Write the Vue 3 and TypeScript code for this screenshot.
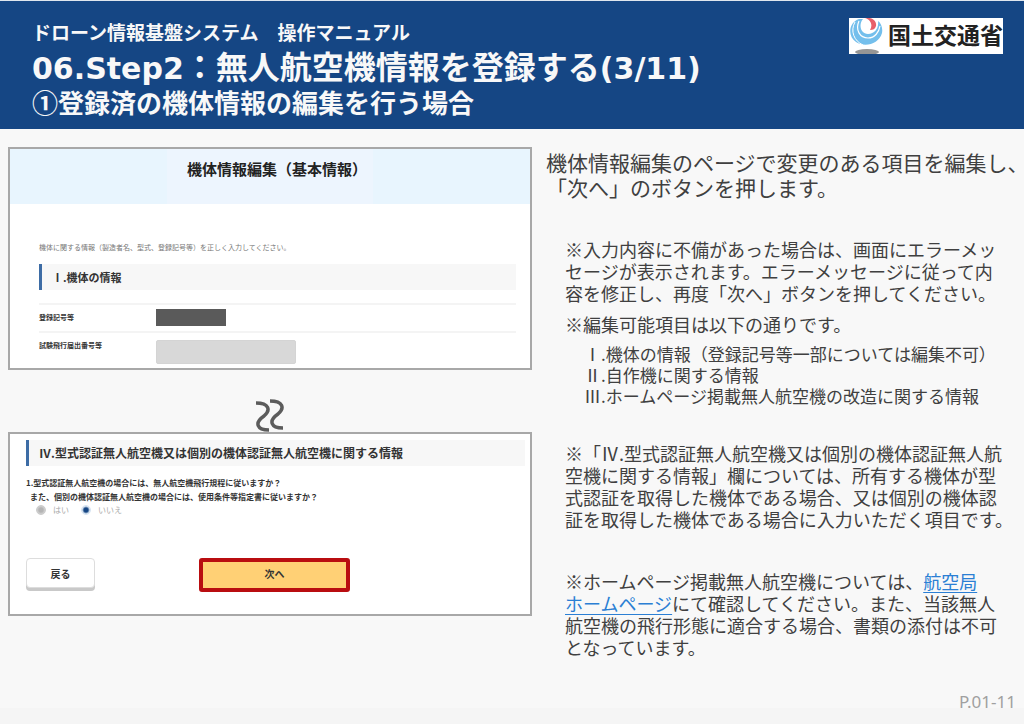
<script setup lang="ts">
import { ref } from 'vue'

const answer = ref<string>('no')

const editableItems: string[] = [
  'Ⅰ.機体の情報（登録記号等一部については編集不可）',
  'Ⅱ.自作機に関する情報',
  'Ⅲ.ホームページ掲載無人航空機の改造に関する情報',
]
</script>

<template>
  <div class="page">
    <header class="banner">
      <div class="titles">
        <p class="system">ドローン情報基盤システム　操作マニュアル</p>
        <h1><span class="latin">06.Step2</span>：無人航空機情報を登録する<span class="latin">(3/11)</span></h1>
        <h2>①登録済の機体情報の編集を行う場合</h2>
      </div>
      <div class="ministry">
        <svg class="emblem" viewBox="0 0 36 36" aria-hidden="true">
          <path d="M10 1 C0 4 -2 18 7 24 C16 30 30 26 33 15 C34 10 32 5 29 3 C30 10 26 16 19 16 C12 16 9 7 14 1 Z" fill="#74bfec" />
          <path d="M6 4 C1 13 5 23 14 27" fill="none" stroke="#fff" stroke-width="1" />
          <path d="M10 3 C6 12 11 20 19 20 C26 20 30 14 31 8" fill="none" stroke="#fff" stroke-width="1.200" />
          <path d="M16 0 C22 -1 28 2 27 8 C26 11 24 12 21 12 C24 7 22 2 16 0 Z" fill="#e8606a" />
          <ellipse cx="18" cy="34" rx="12" ry="3" fill="#959595" />
        </svg>
        <span>国土交通省</span>
      </div>
    </header>

    <main class="content">
      <div class="screens">
        <section class="panel">
          <div class="panel-title"><h3>機体情報編集（基本情報）</h3></div>
          <div class="basic">
            <p class="lead">機体に関する情報（製造者名、型式、登録記号等）を正しく入力してください。</p>
            <h4 class="section-bar">Ⅰ.機体の情報</h4>
            <div class="row">
              <span class="row-label">登録記号等</span>
              <span class="masked"></span>
            </div>
            <div class="row last">
              <label class="row-label" for="flight-number">試験飛行届出番号等</label>
              <input id="flight-number" class="field" type="text" disabled />
            </div>
          </div>
        </section>

        <div class="omission">
          <svg width="30" height="34" viewBox="0 0 30 34" fill="none" stroke="#5c5c5c" stroke-width="3.500" aria-hidden="true">
            <path d="M1 5 C14 5 16 12 9 18 C-1 25 2 32 14 32" />
            <path d="M15 3 C28 3 30 10 23 16 C13 23 16 30 28 30" />
          </svg>
        </div>

        <section class="panel certified">
          <h4 class="section-bar wide">Ⅳ.型式認証無人航空機又は個別の機体認証無人航空機に関する情報</h4>
          <fieldset>
            <legend>
              1.型式認証無人航空機の場合には、無人航空機飛行規程に従いますか？<br />
              <span class="second">また、個別の機体認証無人航空機の場合には、使用条件等指定書に従いますか？</span>
            </legend>
            <div class="choices">
              <label><input v-model="answer" type="radio" name="follow" value="yes" disabled />はい</label>
              <label><input v-model="answer" type="radio" name="follow" value="no" />いいえ</label>
            </div>
          </fieldset>
          <div class="actions">
            <button type="button" class="back">戻る</button>
            <button type="button" class="next">次へ</button>
          </div>
        </section>
      </div>

      <article class="guide">
        <p class="intro">機体情報編集のページで変更のある項目を編集し、<br />「次へ」のボタンを押します。</p>
        <div class="notes">
          <p>※入力内容に不備があった場合は、画面にエラーメッ<br />セージが表示されます。エラーメッセージに従って内<br />容を修正し、再度「次へ」ボタンを押してください。</p>
          <p class="near">※編集可能項目は以下の通りです。</p>
          <ul>
            <li v-for="item in editableItems" :key="item">{{ item }}</li>
          </ul>
          <p class="type">※「Ⅳ.型式認証無人航空機又は個別の機体認証無人航<br />空機に関する情報」欄については、所有する機体が型<br />式認証を取得した機体である場合、又は個別の機体認<br />証を取得した機体である場合に入力いただく項目です。</p>
          <p class="site">※ホームページ掲載無人航空機については、<a href="#">航空局<br />ホームページ</a>にて確認してください。また、当該無人<br />航空機の飛行形態に適合する場合、書類の添付は不可<br />となっています。</p>
        </div>
      </article>
    </main>

    <footer>P.01-11</footer>
  </div>
</template>

<style>
body {
  margin: 0;
  background: #f8f8f8;
}
</style>

<style scoped>
.page {
  min-height: 100vh;
  box-sizing: border-box;
  display: flex;
  flex-direction: column;
  overflow: hidden;
  border-top: 1px solid #dfe6ee;
  background: linear-gradient(to top, #f5f5f5 16px, #f8f8f8 16px);
  color: #404040;
  font-family: "Noto Sans CJK JP", sans-serif;
  text-spacing-trim: space-all;
}

h1, h2, h3, h4, p, ul {
  margin: 0;
  padding: 0;
}

.banner {
  display: flex;
  justify-content: space-between;
  align-items: flex-start;
  padding: 17px 21px 9px 32px;
  background: #154684;
  color: #f8f8f8;
  white-space: nowrap;
}

.system {
  font-size: 19px;
  font-weight: 700;
  line-height: 28px;
}

h1 {
  font-size: 32px;
  font-weight: 700;
  line-height: 38px;
}

.latin {
  font-family: "DejaVu Sans", sans-serif;
  font-size: 30px;
  line-height: 30px;
}

h2 {
  font-size: 26px;
  font-weight: 700;
  line-height: 36px;
}

.ministry {
  display: flex;
  gap: 3px;
  background: #fff;
  color: #222;
  font-size: 23px;
  font-weight: 700;
  line-height: 32px;
}

.emblem {
  width: 36px;
  height: 36px;
}

.content {
  flex: 1;
  display: grid;
  grid-template-columns: minmax(0, 524fr) minmax(0, 478fr);
  gap: 14px;
  padding: 18px 0 0 8px;
}

.panel {
  box-sizing: border-box;
  border: 2px solid #a8a8a8;
  background: #fff;
  color: #333;
}

.panel-title {
  display: flex;
  justify-content: center;
  background: #e8f5fe;
}

.panel-title h3 {
  padding: 7px 6px 23px 20px;
  background: #edf5fe;
  color: #222;
  font-size: 15px;
  line-height: 25px;
}

.basic {
  padding: 38px 14px 4px 29px;
}

.lead {
  color: #777;
  font-size: 7px;
  line-height: 10px;
}

.section-bar {
  margin-top: 12px;
  padding-left: 10px;
  border-left: 3px solid #3d6ca5;
  background: #f7f7f7;
  font-size: 11px;
  line-height: 26px;
}

.row {
  display: grid;
  grid-template-columns: 117px 1fr;
  box-sizing: border-box;
  min-height: 28px;
  padding-top: 4px;
  border-top: 2px solid #f4f4f4;
}

.section-bar + .row {
  margin-top: 13px;
}

.row.last {
  padding-top: 7px;
}

.row-label {
  font-size: 7px;
  font-weight: 700;
  line-height: 16px;
}

.last .row-label {
  line-height: 10px;
}

.masked {
  width: 70px;
  height: 17px;
  background: #5a5a5a;
}

.field {
  box-sizing: border-box;
  width: 140px;
  height: 24px;
  padding: 0;
  border: 1px solid #d4d4d4;
  border-radius: 2px;
  background: #d8d8d8;
}

.omission {
  display: flex;
  justify-content: center;
  padding-top: 28px;
}

.omission svg {
  display: block;
}

.certified {
  padding: 6px 5px 22px 16px;
}

.section-bar.wide {
  margin: 0;
  font-size: 12px;
}

fieldset {
  min-width: 0;
  margin: 0;
  padding: 0;
  border: 0;
}

legend {
  padding: 10px 0 0;
  font-size: 8px;
  font-weight: 700;
  line-height: 14px;
}

.second {
  padding-left: 4px;
}

.choices {
  display: flex;
  gap: 12px;
  padding-left: 10px;
  color: #aaa;
  font-size: 8px;
  line-height: 12px;
}

.choices label {
  display: flex;
  align-items: center;
  gap: 7px;
}

.choices input {
  appearance: none;
  box-sizing: border-box;
  width: 10px;
  height: 10px;
  margin: 0;
  border: 1px solid #ccc;
  border-radius: 50%;
  background: radial-gradient(circle, #b4b4b4 0 2px, #d2d2d2 4px);
}

.choices input:checked {
  border-color: #d6e4f2;
  background: radial-gradient(circle, #154684 0 2px, #eef5fc 4px);
}

.actions {
  display: flex;
  align-items: flex-start;
  gap: 104px;
  padding-top: 42px;
}

button {
  box-sizing: border-box;
  margin: 0;
  padding: 0;
  color: #333;
  font-family: inherit;
  font-size: 10px;
  font-weight: 700;
}

.back {
  width: 69px;
  height: 30px;
  border: 1px solid #ddd;
  border-radius: 4px;
  background: #fff;
  box-shadow: 0 3px 0 #c9c9c9;
}

.next {
  width: 151px;
  height: 34px;
  padding-bottom: 4px;
  border: 4px solid #b90d10;
  border-radius: 3px;
  background: #ffd075;
}

.guide {
  padding-top: 3px;
  white-space: nowrap;
}

.intro {
  font-size: 21px;
  line-height: 25px;
}

.notes {
  padding: 38px 0 0 19px;
  font-size: 18px;
  line-height: 22px;
}

.near {
  margin-top: 9px;
}

ul {
  margin-top: 8px;
  padding-left: 19px;
  list-style: none;
  font-size: 17px;
  line-height: 21px;
}

.type {
  margin-top: 36px;
}

.site {
  margin-top: 40px;
}

a {
  color: #2b7fd4;
  text-decoration: underline;
  text-underline-offset: 3px;
}

footer {
  padding: 0 8px 11px;
  color: #a0a0a0;
  font-family: "Noto Sans", sans-serif;
  font-size: 17px;
  line-height: 22px;
  text-align: right;
}
</style>
